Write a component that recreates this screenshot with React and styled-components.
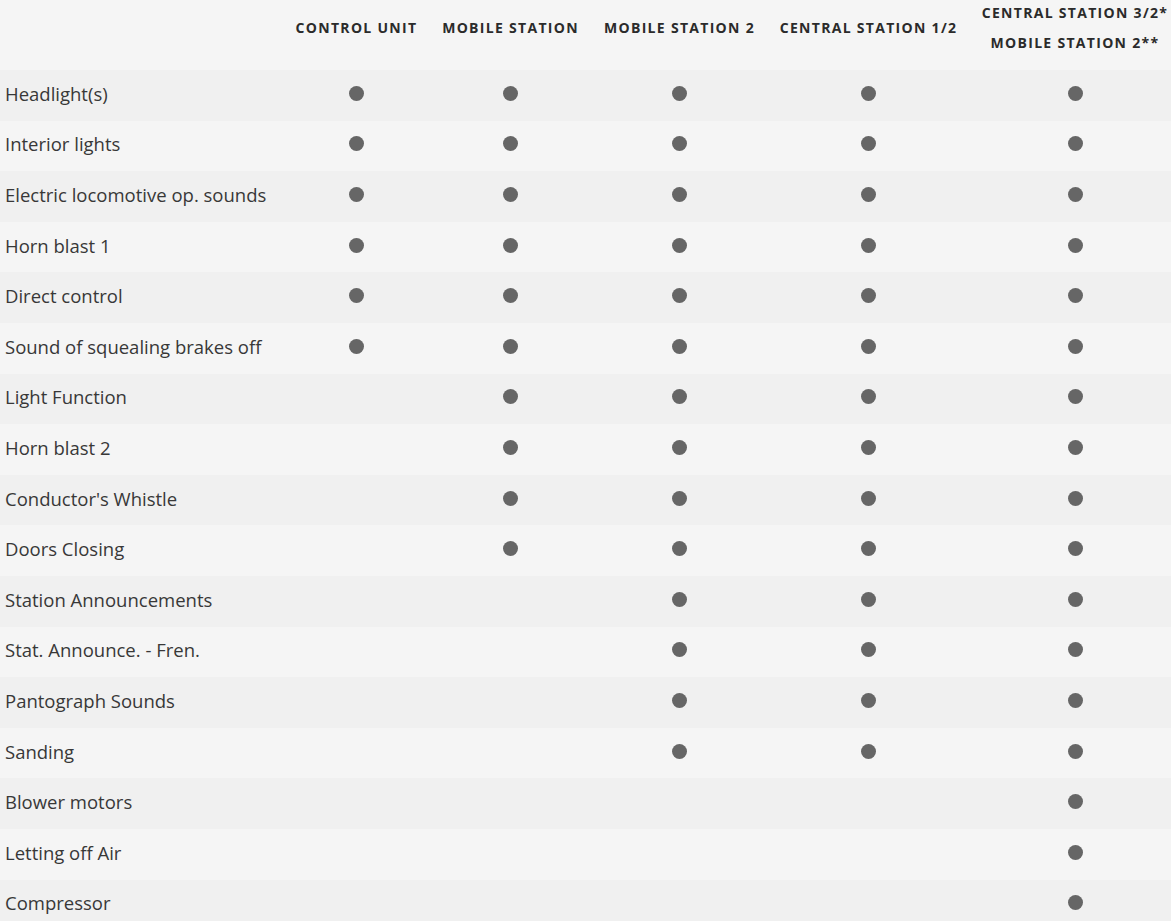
import React from "react";
import styled, { createGlobalStyle } from "styled-components";

const Global = createGlobalStyle`
  html, body { margin: 0; padding: 0; background: #f5f5f5; overflow: hidden; }
  body { font-family: "Open Sans", "Liberation Sans", sans-serif; color: #333; }
`;

const COLS = "283px 147px 161px 177px 201px 1fr";

const Table = styled.div`
  width: 1171px;
  display: flex;
  flex-direction: column;
`;

const HeaderRow = styled.div`
  display: grid;
  grid-template-columns: ${COLS};
  grid-template-rows: 60px;
  margin-top: -2px;
  padding-bottom: 12px;
  align-items: center;
`;

const HeadCell = styled.div`
  font-weight: 700;
  font-size: 14px;
  letter-spacing: 1.3px;
  line-height: 30px;
  text-transform: uppercase;
  text-align: center;
  color: #2b2b2b;
  white-space: nowrap;
  padding-left: ${(p) => (p.$shift ? "10px" : "0")};
`;

const Row = styled.div`
  display: grid;
  grid-template-columns: ${COLS};
  height: 50.6px;
  box-sizing: border-box;
  padding-bottom: 4px;
  align-items: center;
  background: ${(p) => (p.$odd ? "#f0f0f0" : "#f5f5f5")};
`;

const Label = styled.div`
  font-size: 18.5px;
  padding-left: 5px;
  color: #383838;
  white-space: nowrap;
`;

const Cell = styled.div`
  display: flex;
  justify-content: center;
  padding-left: ${(p) => (p.$shift ? "10px" : "0")};
`;

const Dot = styled.span`
  width: 15px;
  height: 15px;
  border-radius: 50%;
  background: #666;
  display: block;
`;

const heads = [
  ["Control Unit"],
  ["Mobile Station"],
  ["Mobile Station 2"],
  ["Central Station 1/2"],
  ["Central Station 3/2*", "Mobile Station 2**"],
];

const rows = [
  ["Headlight(s)", 5],
  ["Interior lights", 5],
  ["Electric locomotive op. sounds", 5],
  ["Horn blast 1", 5],
  ["Direct control", 5],
  ["Sound of squealing brakes off", 5],
  ["Light Function", 4],
  ["Horn blast 2", 4],
  ["Conductor's Whistle", 4],
  ["Doors Closing", 4],
  ["Station Announcements", 3],
  ["Stat. Announce. - Fren.", 3],
  ["Pantograph Sounds", 3],
  ["Sanding", 3],
  ["Blower motors", 1],
  ["Letting off Air", 1],
  ["Compressor", 1],
];

export default function App() {
  return (
    <>
      <Global />
      <Table>
        <HeaderRow>
          <div />
          {heads.map((h, i) => (
            <HeadCell key={i} $shift={i === 4}>
              {h.map((l, j) => (
                <div key={j}>{l}</div>
              ))}
            </HeadCell>
          ))}
        </HeaderRow>
        {rows.map(([label, n], i) => (
          <Row key={label} $odd={i % 2 === 0}>
            <Label>{label}</Label>
            {[0, 1, 2, 3, 4].map((c) => (
              <Cell key={c} $shift={c === 4}>
                {c >= 5 - n ? <Dot /> : null}
              </Cell>
            ))}
          </Row>
        ))}
      </Table>
    </>
  );
}
